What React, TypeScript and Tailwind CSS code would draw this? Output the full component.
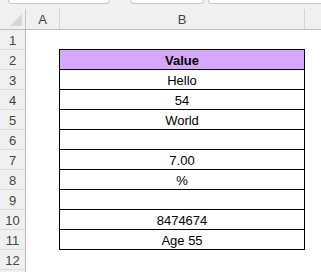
import React from "react";

const rows = ["Hello", "54", "World", "", "7.00", "%", "", "8474674", "Age 55"];

function App() {
  return (
    <div className="w-[321px] h-[272px] overflow-hidden bg-white font-['Liberation_Sans',Arial,sans-serif]">
      {/* tab strip */}
      <div className="h-[9px] bg-[#f0f0f0] flex items-start">
        <div className="ml-[8px] w-[102px] h-[4px] bg-white border-x border-b border-[#c8c8c8] rounded-b-[4px]" />
        <div className="ml-[20px] w-[74px] h-[4px] bg-white border-x border-b border-[#c8c8c8] rounded-b-[4px]" />
        <div className="ml-[4px] flex-1 h-[4px] bg-white border-l border-b border-[#c8c8c8] rounded-bl-[4px]" />
      </div>

      {/* column headers */}
      <div className="flex h-[21px] bg-[#f0f0f0] border-b border-[#bdbdbd] text-[13px] text-[#444]">
        <div className="w-[26px] border-r border-[#c6c6c6] flex items-end justify-end pr-[3px] pb-[3px]">
          <svg width="12" height="12" viewBox="0 0 12 12">
            <polygon points="12,0 12,12 0,12" fill="#d6d6d6" />
          </svg>
        </div>
        <div className="w-[34px] border-r border-[#d4d4d4] flex items-center justify-center pt-[2px]">A</div>
        <div className="w-[245px] border-r border-[#d4d4d4] flex items-center justify-center pt-[2px]">B</div>
        <div className="flex-1" />
      </div>

      <div className="flex">
        {/* row numbers */}
        <div className="w-[26px] h-[242px] bg-[#f0f0f0] border-r border-[#bdbdbd] text-[13px] text-[#444] shrink-0">
          {Array.from({ length: 12 }, (_, i) => (
            <div key={i} className="h-[20px] border-b border-[#dcdcdc] flex items-center justify-center pt-[2px]">
              {i + 1}
            </div>
          ))}
        </div>

        {/* grid */}
        <div className="flex-1 pl-[33px] pt-[19px] text-[13px] text-black">
          <div className="w-[246px] border-x border-b border-black">
            <div className="h-[20px] border-t border-black bg-[#d4a9fb] font-bold flex items-center justify-center pt-[2px]">
              Value
            </div>
            {rows.map((r, i) => (
              <div key={i} className="h-[20px] border-t border-black flex items-center justify-center pt-[2px]">
                {r}
              </div>
            ))}
          </div>
        </div>
      </div>
    </div>
  );
}

export default App;
